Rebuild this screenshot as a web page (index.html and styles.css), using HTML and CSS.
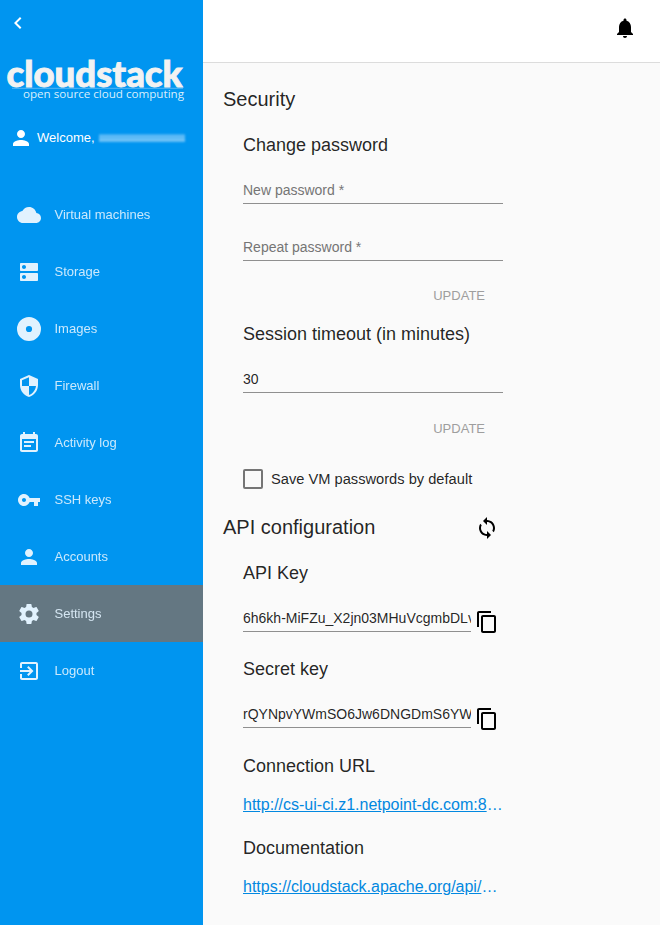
FILE: index.html
```html
<!DOCTYPE html>
<html lang="en">
<head>
<meta charset="utf-8">
<title>CloudStack - Settings</title>
<link rel="stylesheet" href="styles.css">
</head>
<body>
<div class="app">
  <aside class="sidebar">
    <div class="collapse"><svg class="icon" viewBox="0 0 24 24"><path d="M15.41 7.41L14 6l-6 6 6 6 1.41-1.41L10.83 12z"/></svg></div>
    <svg class="logo" viewBox="0 0 203 50" role="img">
      <path class="logo-line" d="M12 34.3H183"/>
      <text class="logo-name" y="33" x="6.500" textLength="176" lengthAdjust="spacingAndGlyphs">cloudstack</text>
      <text class="logo-tag" y="43.8" x="23" textLength="161" lengthAdjust="spacingAndGlyphs">open source cloud computing</text>
    </svg>
    <div class="user">
      <svg class="icon" viewBox="0 0 24 24"><path d="M12 12c2.21 0 4-1.79 4-4s-1.79-4-4-4-4 1.79-4 4 1.79 4 4 4zm0 2c-2.67 0-8 1.34-8 4v2h16v-2c0-2.66-5.33-4-8-4z"/></svg>
      <span>Welcome,</span><i class="masked"></i>
    </div>
    <nav class="menu">
      <a class="item"><svg class="icon" viewBox="0 0 24 24"><path d="M19.35 10.04C18.67 6.59 15.64 4 12 4 9.11 4 6.6 5.64 5.35 8.04 2.34 8.36 0 10.91 0 14c0 3.31 2.69 6 6 6h13c2.76 0 5-2.24 5-5 0-2.64-2.05-4.78-4.65-4.96z"/></svg><span>Virtual machines</span></a>
      <a class="item"><svg class="icon" viewBox="0 0 24 24"><path d="M20 13H4c-.55 0-1 .45-1 1v6c0 .55.45 1 1 1h16c.55 0 1-.45 1-1v-6c0-.55-.45-1-1-1zM7 19c-1.1 0-2-.9-2-2s.9-2 2-2 2 .9 2 2-.9 2-2 2zM20 3H4c-.55 0-1 .45-1 1v6c0 .55.45 1 1 1h16c.55 0 1-.45 1-1V4c0-.55-.45-1-1-1zM7 9c-1.1 0-2-.9-2-2s.9-2 2-2 2 .9 2 2-.9 2-2 2z"/></svg><span>Storage</span></a>
      <a class="item"><svg class="icon" viewBox="0 0 24 24"><path fill-rule="evenodd" d="M12 0a12 12 0 1 0 0 24 12 12 0 0 0 0-24zm0 8.9a3.1 3.1 0 1 1 0 6.2 3.1 3.1 0 0 1 0-6.2z"/></svg><span>Images</span></a>
      <a class="item"><svg class="icon" viewBox="0 0 24 24"><path d="M12 1L3 5v6c0 5.55 3.84 10.74 9 12 5.16-1.26 9-6.45 9-12V5l-9-4zm0 10.99h7c-.53 4.12-3.28 7.79-7 8.94V12H5V6.3l7-3.11v8.8z"/></svg><span>Firewall</span></a>
      <a class="item"><svg class="icon" viewBox="0 0 24 24"><path d="M17 10H7v2h10v-2zm2-7h-1V1h-2v2H8V1H6v2H5c-1.11 0-1.99.9-1.99 2L3 19c0 1.1.89 2 2 2h14c1.1 0 2-.9 2-2V5c0-1.1-.9-2-2-2zm0 16H5V8h14v11zm-5-5H7v2h7v-2z"/></svg><span>Activity log</span></a>
      <a class="item"><svg class="icon" viewBox="0 0 24 24"><path d="M12.65 10C11.83 7.67 9.61 6 7 6c-3.31 0-6 2.69-6 6s2.69 6 6 6c2.61 0 4.83-1.67 5.65-4H17v4h4v-4h2v-4H12.65zM7 14c-1.1 0-2-.9-2-2s.9-2 2-2 2 .9 2 2-.9 2-2 2z"/></svg><span>SSH keys</span></a>
      <a class="item"><svg class="icon" viewBox="0 0 24 24"><path d="M12 12c2.21 0 4-1.79 4-4s-1.79-4-4-4-4 1.79-4 4 1.79 4 4 4zm0 2c-2.67 0-8 1.34-8 4v2h16v-2c0-2.66-5.33-4-8-4z"/></svg><span>Accounts</span></a>
      <a class="item active"><svg class="icon" viewBox="0 0 24 24"><path d="M12 15.5A3.5 3.5 0 0 1 8.5 12 3.5 3.5 0 0 1 12 8.5a3.5 3.5 0 0 1 3.5 3.5 3.5 3.5 0 0 1-3.500 3.5m7.430-2.530c.04-.32.07-.64.07-.97 0-.33-.03-.66-.07-1l2.110-1.630c.19-.15.24-.42.12-.64l-2-3.460c-.12-.22-.39-.31-.61-.22l-2.490 1c-.52-.39-1.060-.73-1.690-.98l-.37-2.650A.506.506 0 0 0 14 2h-4c-.25 0-.46.18-.5.42l-.37 2.650c-.63.25-1.170.59-1.690.98l-2.490-1c-.22-.09-.49 0-.61.22l-2 3.460c-.13.22-.07.49.12.64L4.570 11c-.04.34-.07.67-.07 1 0 .33.03.65.07.97l-2.110 1.660c-.19.15-.25.42-.12.64l2 3.460c.12.22.39.3.61.22l2.490-1.010c.52.4 1.060.74 1.690.99l.37 2.650c.04.24.25.42.5.42h4c.25 0 .46-.18.5-.42l.37-2.650c.63-.26 1.170-.59 1.690-.99l2.490 1.010c.22.08.49 0 .61-.22l2-3.460c.12-.22.07-.49-.12-.64l-2.110-1.660z"/></svg><span>Settings</span></a>
      <a class="item"><svg class="icon" viewBox="0 0 24 24"><path d="M10.090 15.590L11.500 17l5-5-5-5-1.410 1.410L12.670 11H3v2h9.670l-2.580 2.590zM19 3H5c-1.110 0-2 .9-2 2v4h2V5h14v14H5v-4H3v4c0 1.100.89 2 2 2h14c1.100 0 2-.9 2-2V5c0-1.100-.9-2-2-2z"/></svg><span>Logout</span></a>
    </nav>
  </aside>
  <main class="main">
    <header class="topbar"><svg class="icon" viewBox="0 0 24 24"><path d="M12 22c1.100 0 2-.9 2-2h-4c0 1.100.89 2 2 2zm6-6v-5c0-3.070-1.640-5.640-4.500-6.320V4c0-.83-.67-1.500-1.500-1.500s-1.500.67-1.500 1.500v.68C7.630 5.360 6 7.920 6 11v5l-2 2v1h16v-1l-2-2z"/></svg></header>
    <div class="content">
      <h2>Security</h2>
      <section>
        <h3>Change password</h3>
        <div class="field placeholder">New password *</div>
        <div class="field placeholder second">Repeat password *</div>
        <div class="actions">UPDATE</div>
        <h3>Session timeout (in minutes)</h3>
        <div class="field">30</div>
        <div class="actions timeout">UPDATE</div>
        <div class="check"><i class="box"></i><span>Save VM passwords by default</span></div>
      </section>
      <div class="title-row">
        <h2>API configuration</h2>
        <svg class="icon" viewBox="0 0 24 24"><path d="M12 4V1L8 5l4 4V6c3.310 0 6 2.690 6 6 0 1.010-.25 1.970-.7 2.800l1.460 1.460C19.540 15.030 20 13.570 20 12c0-4.420-3.580-8-8-8zm0 14c-3.310 0-6-2.690-6-6 0-1.010.25-1.970.7-2.800L5.240 7.740C4.460 8.970 4 10.430 4 12c0 4.420 3.580 8 8 8v3l4-4-4-4v3z"/></svg>
      </div>
      <section>
        <h3>API Key</h3>
        <div class="key"><div class="field">6h6kh-MiFZu_X2jn03MHuVcgmbDLv</div><svg class="icon" viewBox="0 0 24 24"><path d="M16 1H4c-1.100 0-2 .9-2 2v14h2V3h12V1zm3 4H8c-1.100 0-2 .9-2 2v14c0 1.100.9 2 2 2h11c1.100 0 2-.9 2-2V7c0-1.100-.9-2-2-2zm0 16H8V7h11v14z"/></svg></div>
        <h3>Secret key</h3>
        <div class="key secret"><div class="field">rQYNpvYWmSO6Jw6DNGDmS6YW</div><svg class="icon" viewBox="0 0 24 24"><path d="M16 1H4c-1.100 0-2 .9-2 2v14h2V3h12V1zm3 4H8c-1.100 0-2 .9-2 2v14c0 1.100.9 2 2 2h11c1.100 0 2-.9 2-2V7c0-1.100-.9-2-2-2zm0 16H8V7h11v14z"/></svg></div>
        <h3>Connection URL</h3>
        <div class="link"><a>http://cs-ui-ci.z1.netpoint-dc.com:8080/client/api</a></div>
        <h3>Documentation</h3>
        <div class="link"><a>https://cloudstack.apache.org/api/apidocs-4.9/</a></div>
      </section>
    </div>
  </main>
</div>
</body>
</html>
```
FILE: styles.css
```css
* { box-sizing: border-box; }
body { margin: 0; font-family: "Liberation Sans", Arial, sans-serif; color: rgba(0, 0, 0, .87); }
.app { display: flex; width: 660px; height: 925px; overflow: hidden; }
.icon { width: 24px; height: 24px; fill: currentColor; flex: none; display: block; }

.sidebar { width: 203px; flex: none; background: #0095f0; color: #fff; }
.collapse { height: 54px; padding: 11px 0 0 6px; }
.logo { display: block; width: 203px; height: 50px; }
.logo-name { font: 900 36.5px Lato, sans-serif; fill: #f2f2f2; stroke: #f2f2f2; stroke-width: .9; }
.logo-tag { font: 400 11.3px "Open Sans", sans-serif; fill: #d9effc; }
.logo-line { stroke: #8fcff8; stroke-width: .6; }
.user { display: flex; align-items: center; height: 24px; margin-top: 22px; padding-left: 9px; font-size: 13px; line-height: 16px; }
.user span { margin-left: 4px; }
.masked { width: 86px; height: 8px; margin: -1px 0 0 4px; background: linear-gradient(#2fa6f3, #6cc1f7 30%, #4bb3f5 50%, #7cc8f8 70%, #58b8f6); filter: blur(.8px); }
.menu { margin-top: 36px; }
.item { display: flex; align-items: center; height: 57px; padding-left: 17px; font-size: 13px; color: #e1f2fe; }
.item span { margin-left: 13.5px; opacity: .9; }
.item.active { background: #647782; }

.main { flex: 1; min-width: 0; background: #fafafa; }
.topbar { height: 63px; display: flex; justify-content: flex-end; padding: 16px 23px 0 0; background: #fff; border-bottom: 1px solid #dcdcdc; color: #000; }
.content { padding: 20px 20px 0; width: 300px; }
h2 { margin: 0; font-size: 20px; font-weight: 400; line-height: 32px; }
h3 { margin: 0; font-size: 18px; font-weight: 400; line-height: 28px; }
section { padding: 16px 0 0 20px; }
.field { height: 45px; padding-top: 23px; line-height: 16px; font-size: 14px; border-bottom: 1px solid #8f8f8f; white-space: nowrap; overflow: hidden; }
section > .field { width: 260px; }
.placeholder { color: #757575; }
.second { margin-top: 12px; }
.actions { width: 260px; height: 59px; padding: 27px 18px 0 0; text-align: right; font-size: 13px; line-height: 16px; color: #9e9e9e; }
.actions.timeout { padding-top: 28px; }
.check { display: flex; align-items: center; height: 20px; margin-top: 17px; font-size: 14.667px; line-height: 20px; white-space: nowrap; }
.box { width: 20px; height: 20px; border: 2px solid #757575; border-radius: 2px; margin-right: 8px; flex: none; }
.title-row { display: flex; justify-content: space-between; align-items: center; width: 276px; margin-top: 22px; }
.title-row .icon { color: #000; margin-top: 2px; }
.key { display: flex; width: 260px; height: 68px; }
.key .field { width: 228px; }
.key .icon { color: #000; margin: 23px 0 0 4px; }
.key.secret { height: 69px; }
.key.secret .icon { margin-top: 24px; }
.link { width: 260px; margin: 13px 0 17px; font-size: 16px; line-height: 24px; color: #0288e0; white-space: nowrap; overflow: hidden; text-overflow: ellipsis; }
.link a { text-decoration: underline; }
```
